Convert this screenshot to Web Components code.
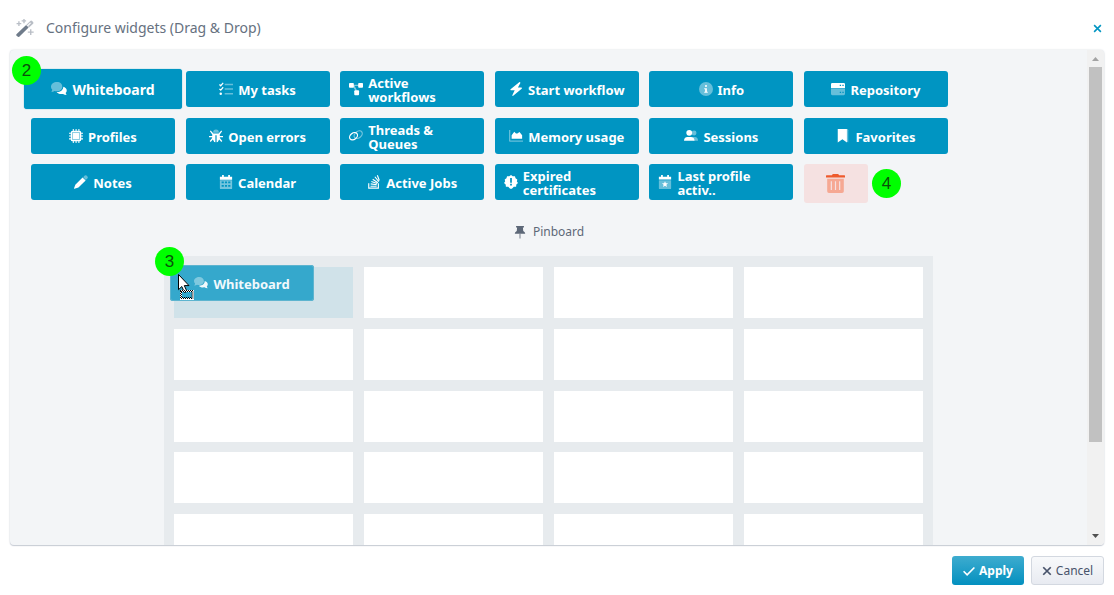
<!DOCTYPE html>
<html lang="en">
<head>
<meta charset="utf-8">
<title>Configure widgets</title>
<style>
html, body { margin: 0; height: 100%; }
body { background: #fff; font-family: "Noto Sans", "Open Sans", sans-serif; font-size: 13px; color: #5d6878; }
</style>
</head>
<body>
<config-dialog>
  <ui-icon slot="icon" name="wand"></ui-icon>
  <span slot="title">Configure widgets (Drag &amp; Drop)</span>
  <widget-palette>
    <widget-tile icon="chat" lifted step="2">Whiteboard</widget-tile>
    <widget-tile icon="tasks">My tasks</widget-tile>
    <widget-tile icon="flow">Active workflows</widget-tile>
    <widget-tile icon="bolt">Start workflow</widget-tile>
    <widget-tile icon="info">Info</widget-tile>
    <widget-tile icon="server">Repository</widget-tile>
    <widget-tile icon="chip">Profiles</widget-tile>
    <widget-tile icon="bug">Open errors</widget-tile>
    <widget-tile icon="rings">Threads &amp; Queues</widget-tile>
    <widget-tile icon="chart">Memory usage</widget-tile>
    <widget-tile icon="users">Sessions</widget-tile>
    <widget-tile icon="bookmark">Favorites</widget-tile>
    <widget-tile icon="pencil">Notes</widget-tile>
    <widget-tile icon="calendar">Calendar</widget-tile>
    <widget-tile icon="stack">Active Jobs</widget-tile>
    <widget-tile icon="badge">Expired certificates</widget-tile>
    <widget-tile icon="calstar">Last profile activ..</widget-tile>
    <trash-drop step="4"></trash-drop>
  </widget-palette>
  <pin-board rows="5" columns="4">
    <widget-tile icon="chat" ghost>Whiteboard</widget-tile>
  </pin-board>
</config-dialog>

<script>
const icons = {
  wand: '<path fill="#6f7b8a" d="M.4 13.600 9 5.400l2.200 2.200-8.300 8.100q-.8.500-1.500-.2l-.9-.7q-.7-.6-.1-1.200z"/><path fill="#b9bec6" d="m9.200 5.100 3.500-3.400q.8-.7 1.600 0l.9.900q.7.800 0 1.600l-3.600 3.300-1-1 2.700-2.800-.7-.7-2.700 2.700zM2 2h1.200v1.500h1.500v1.200H3.200v1.500H2V4.700H.5V3.500H2zM6.500 0h1.200v1H9v1.200H7.700v1.500H6.500V2.200H5V1h1.500zM12.500 9h1.200v2h2v1.200h-2v2h-1.200v-2h-2V11h2z"/>',
  chat: '<path opacity=".4" d="M6 1C2.700 1 0 3 0 5.700c0 1.200.5 2.200 1.300 3L.4 11c1.200 0 2.300-.4 3.100-.9 4.200 1 7.800-1.200 7.800-4.400C11.300 3 9.200 1 6 1z"/><path d="M12.300 5.700c0 3.400-3.200 5.500-6.700 5.300.9 1.500 3.700 2.500 6.400 1.900 1 .6 2.200 1.100 3.600 1.100l-1-2c2.100-2 1.400-5.100-2.300-6.300z"/>',
  tasks: '<path d="m.5 2.800 1.500 1.500L4.800 1M.5 7.800 2 9.300 4.800 6" fill="none" stroke="currentColor" stroke-width="1.400"/><circle cx="2" cy="13.500" r="1.400"/><path opacity=".4" d="M6.500 2H16v1.800H6.500zM6.500 7H16v1.800H6.500zM6.500 12.500H16v1.800H6.500z"/>',
  flow: '<path opacity=".5" d="M4 3h8v1.500H6.500l2.500 5-1.300.7L4 4.800z"/><rect y="1" width="5.500" height="5.500" rx="1"/><rect x="10.500" y="1" width="5.500" height="5.500" rx="1"/><rect x="6" y="9.500" width="5.500" height="5.500" rx="1"/>',
  bolt: '<path d="M12 0 1.800 8.200q-.8.900.4 1.300h4.300L3.800 15q-.1 1.300 1 .8l9.700-8.200q.9-.9-.3-1.400h-4L13 1q0-1-1-1z"/>',
  info: '<circle opacity=".4" cx="8" cy="8" r="8"/><circle cx="8" cy="4.500" r="1.200"/><path d="M6 7h3v4h1v1.300H6V11h1V8.300H6z"/>',
  server: '<path fill-rule="evenodd" d="M1.500 1h13Q16 1 16 2.300V7H0V2.300Q0 1 1.500 1zM10 3v1.500h1.500V3zm3 0v1.500h1.500V3z"/><path opacity=".4" fill-rule="evenodd" d="M0 8h16v5.700q0 1.300-1.500 1.300h-13Q0 15 0 13.700zM10 11v1.500h1.500V11zm3 0v1.500h1.500V11z"/>',
  chip: '<rect x="4.600" y="4.600" width="6.800" height="6.800"/><path opacity=".55" d="M3 3h10v10H3z"/><path fill-rule="evenodd" d="M4.300 0h1.200v2h2V0h1.200v2h2V0h1.200v2Q14 2 14 4.300h2v1.200h-2v2h2v1.200h-2v2h2v1.200h-2Q14 14 11.900 14v2h-1.200v-2h-2v2H7.500v-2h-2v2H4.300v-2Q2 14 2 11.900H0v-1.200h2v-2H0V7.500h2v-2H0V4.300h2Q2 2 4.300 2zM3.500 3.500v9h9v-9z"/>',
  bug: '<path opacity=".4" d="M4.700 4.200a3.300 3.500 0 0 1 6.600 0z"/><path d="m2 1.700 3 3.500h6l3-3.500 1 .9-2.700 3.600V8H16v1.400h-3.600v1l2.800 3.400-1.100 1-2.500-2.900Q10.500 15 8.700 15V7H7.300v8Q5.500 15 4.400 11.900l-2.500 2.900-1.100-1 2.800-3.400v-1H0V8h3.700V6.200L1 2.600z"/>',
  rings: '<g fill="none" stroke="currentColor" stroke-width="1.400"><ellipse cx="10.500" cy="6.500" rx="5.200" ry="3.600" transform="rotate(-38 10.500 6.500)" opacity=".45"/><ellipse cx="5.200" cy="8.300" rx="5" ry="3.600" transform="rotate(-38 5.200 8.300)"/></g>',
  chart: '<path opacity=".4" d="M0 1h1.500v12H16v1.500H1Q0 14.500 0 13.500z"/><path d="M3 11V7l3-4 2 2h1.500L12 3.500l3 3.500v4z"/>',
  users: '<g opacity=".4"><circle cx="11.500" cy="4.500" r="2.800"/><path d="M10 9h2.500Q16 9 16 13.500h-5z"/></g><circle cx="6" cy="4.300" r="3.300"/><path d="M0 13.500Q0 9 4 9h4q4 0 4 4.500z"/>',
  bookmark: '<path d="M2 0h10.500v15.500l-5.200-3.800L2 15.500z"/><path opacity=".4" d="M12.500 0Q14 0 14 1.500v14l-1.500-1z"/>',
  pencil: '<path opacity=".4" d="m10.500 2.500 1.800-1.900q1-.9 2 0l1.100 1.200q.9 1 0 2l-1.900 1.800z"/><path d="m9.800 2.800 3.500 3.500-8.200 8.100L.5 15.600q-.6 0-.5-.6L1.500 11z"/>',
  calendar: '<path d="M3.500 0h2v2h5V0h2v2H15v3.500H1V2h2.500z"/><path opacity=".45" fill-rule="evenodd" d="M1 6h14v9q0 1-1 1H2q-1 0-1-1zM3 7.500v2h2.500v-2zm3.800 0v2h2.400v-2zm3.700 0v2H13v-2zM3 11.500v2h2.500v-2zm3.800 0v2h2.400v-2zm3.700 0v2H13v-2z"/>',
  stack: '<path fill="none" stroke="currentColor" stroke-width="1.300" d="M2 9.500V15h11V9.500M4 12.800h7M4.200 10.200l7 1M5 7.500l6.600 2.300M6.500 4.800l6 4M9 2l4.500 5.500M11.800.3l2.300 6"/>',
  badge: '<path fill-rule="evenodd" d="m8 0 2 1.500 2.500-.2.700 2.300 2 1.500-.5 2.200L16 9l-1.900 1.800-.3 2.500-2.600.2L9 15.700H7l-2.200-2.200-2.600-.2-.3-2.500L0 9l1.300-1.700-.5-2.200 2-1.500.7-2.300L6 1.500zM7 3.500v5.300h2V3.500zm0 6.500v2h2v-2z"/>',
  calstar: '<path d="M3.500 0h2v2h5V0h2v2H15v3H1V2h2.500z"/><path opacity=".4" d="M1 6h14v9q0 1-1 1H2q-1 0-1-1z"/><path d="m8 7 1 2.300 2.500.2-1.900 1.600.6 2.500L8 12.300l-2.200 1.300.6-2.500-1.900-1.600L7 9.300z"/>',
  trash: '<path fill="#ee5a2c" d="M0 1.500q0-.5.500-.5H5l.7-1h4.600l.7 1h4.500q.5 0 .5.500V3H0z"/><path fill="#f6a893" fill-rule="evenodd" d="M1 4h14v10.500q0 1.500-1.500 1.500h-11Q1 16 1 14.500zM4 6v7.500h1V6zm3.500 0v7.500h1V6zM11 6v7.500h1V6z"/>',
  pin: '<path d="M3.500 1h9v1.800h-1.200l.4 4q2.300 1 2.300 3.200H2q0-2.200 2.300-3.200l.4-4H3.500z"/><path opacity=".6" d="M7.200 10h1.600v5.500H7.200z"/>',
  check: '<path fill="none" stroke="currentColor" stroke-width="2.200" d="m.8 8.300 4.700 4.700 9.700-9.700"/>',
  cross: '<path fill="none" stroke="currentColor" stroke-width="2.800" d="m2 2 12 12m0-12-12 12"/>'
};

class UiIcon extends HTMLElement {
  constructor() {
    super();
    this.attachShadow({ mode: 'open' });
  }
  connectedCallback() {
    this.shadowRoot.innerHTML = `
      <style>
        :host { display: block; flex: none; width: 14px; height: 14px; }
        svg { display: block; width: 100%; height: 100%; fill: currentColor; overflow: visible; }
      </style>
      <svg viewBox="0 0 16 16" aria-hidden="true">${icons[this.getAttribute('name')] || ''}</svg>`;
  }
}

class StepBadge extends HTMLElement {
  constructor() {
    super();
    this.attachShadow({ mode: 'open' }).innerHTML = `
      <style>
        :host { display: flex; align-items: center; justify-content: center; box-sizing: border-box; width: 29px; height: 29px;
          border-radius: 50%; background: #0f0; color: #0b500b; font: 17px/20px "Liberation Sans", sans-serif; }
      </style>
      <slot></slot>`;
  }
}

class WidgetTile extends HTMLElement {
  constructor() {
    super();
    this.attachShadow({ mode: 'open' });
  }
  connectedCallback() {
    const step = this.getAttribute('step');
    this.shadowRoot.innerHTML = `
      <style>
        :host { display: block; position: relative; width: 144px; height: 36px; }
        button { display: flex; align-items: center; justify-content: center; gap: 5px; width: 100%; height: 100%;
          box-sizing: border-box; margin: 0; padding: 0 9px; border: 0; border-radius: 3px; background: #0095c2;
          color: #fff; font: 700 13px/14px "Noto Sans", "Open Sans", sans-serif; text-align: left; cursor: grab; }
        span { padding-top: 2px; }
        :host([lifted]) { width: 158px; height: 40px; margin: -2px -7px; }
        :host([lifted]) button { font-size: 14px; box-shadow: 0 0 1px #0095c2; }
        :host([lifted]) ui-icon { width: 16px; height: 16px; }
        :host([ghost]) button { background: #35a8cc; color: #f1f9fc; box-shadow: inset 0 0 0 1px #5db4cf; }
        step-badge { position: absolute; left: -12px; top: -13px; }
      </style>
      <button type="button"><ui-icon name="${this.getAttribute('icon')}"></ui-icon><span><slot></slot></span></button>
      ${step ? `<step-badge>${step}</step-badge>` : ''}`;
  }
}

class TrashDrop extends HTMLElement {
  constructor() {
    super();
    this.attachShadow({ mode: 'open' });
  }
  connectedCallback() {
    this.shadowRoot.innerHTML = `
      <style>
        :host { display: flex; align-items: center; gap: 4px; height: 39px; }
        button { display: flex; align-items: center; justify-content: center; width: 64px; height: 100%;
          margin: 0; padding: 0; border: 0; border-radius: 3px; background: #f5e1e1; }
        ui-icon { width: 19px; height: 19px; }
      </style>
      <button type="button" aria-label="Remove widget"><ui-icon name="trash"></ui-icon></button>
      <step-badge>${this.getAttribute('step')}</step-badge>`;
  }
}

class WidgetPalette extends HTMLElement {
  constructor() {
    super();
    this.attachShadow({ mode: 'open' }).innerHTML = `
      <style>
        :host { display: grid; grid-template-columns: repeat(6, 144px); justify-content: space-between;
          align-content: space-between; align-items: start; max-width: 917px; height: 132px; margin: 0 21px; }
      </style>
      <slot></slot>`;
  }
}

class PinBoard extends HTMLElement {
  constructor() {
    super();
    this.attachShadow({ mode: 'open' });
  }
  connectedCallback() {
    const columns = Number(this.getAttribute('columns'));
    const count = columns * Number(this.getAttribute('rows'));
    this.shadowRoot.innerHTML = `
      <style>
        :host { display: flex; flex-direction: column; align-items: center; padding-top: 19px; }
        h2 { display: flex; align-items: center; gap: 6px; margin: 0 0 14px; font-size: 12px; line-height: 20px; font-weight: 400; color: #5d6878; }
        .board { position: relative; display: grid; grid-template-columns: repeat(${columns}, 1fr); grid-auto-rows: 51px;
          column-gap: 11px; align-content: space-between; box-sizing: border-box; width: 769px; max-width: 100%;
          height: 319px; padding: 11px 10px 10px; background: #e7ebee; }
        .cell { background: #fff; }
        .cell.target { background: #d0e2e9; }
        .drag { position: absolute; left: 6px; top: 9px; }
        step-badge { position: absolute; left: -15px; top: -18px; }
        svg { position: absolute; left: 8px; top: 9px; }
      </style>
      <h2><ui-icon name="pin"></ui-icon>Pinboard</h2>
      <div class="board">
        ${Array.from({ length: count }, (_, i) => `<div class="cell${i ? '' : ' target'}"></div>`).join('')}
        <div class="drag">
          <slot></slot>
          <step-badge>3</step-badge>
          <svg width="18" height="27" viewBox="0 0 18 27" aria-hidden="true">
            <path d="M.5.5v15.200l3.300-3.200 2.700 6 2.500-1-2.700-5.900h4.700z" fill="#fff" stroke="#000"/>
            <path d="M3 17h12v8H3z" fill="none" stroke="#fff" stroke-width="2"/>
            <path d="M2 16.500h13v8H2.500v-8M3 17.500h11v6H3.500v-6" fill="none" stroke="#000" stroke-dasharray="1 1"/>
          </svg>
        </div>
      </div>`;
  }
}

class ScrollTrack extends HTMLElement {
  constructor() {
    super();
    this.attachShadow({ mode: 'open' }).innerHTML = `
      <style>
        :host { display: flex; flex-direction: column; align-items: center; flex: none; width: 17px; background: #f1f1f1; }
        svg { flex: none; width: 17px; height: 17px; }
        .track { flex: 1; width: 13px; }
        .thumb { height: 81.4%; background: #c1c1c1; }
      </style>
      <svg viewBox="0 0 17 17" aria-hidden="true"><path fill="#a3a3a3" d="M5 11l3.500-4 3.500 4z"/></svg>
      <div class="track"><div class="thumb"></div></div>
      <svg viewBox="0 0 17 17" aria-hidden="true"><path fill="#505050" d="M5 6l3.500 4L12 6z"/></svg>`;
  }
}

class DialogButton extends HTMLElement {
  constructor() {
    super();
    this.attachShadow({ mode: 'open' });
  }
  connectedCallback() {
    this.shadowRoot.innerHTML = `
      <style>
        :host { display: block; }
        button { display: flex; align-items: center; justify-content: center; gap: 4px; width: 73px; height: 29px;
          box-sizing: border-box; margin: 0; padding: 0; border: 1px solid #d3d8e0; border-radius: 3px;
          background: linear-gradient(#f8f9fb, #e8ebf1); color: #48536b; font: 12px/20px "Noto Sans", "Open Sans", sans-serif; }
        ui-icon { width: 10px; height: 10px; }
        :host([primary]) button { width: 72px; border: 0; background: linear-gradient(#3eaccf, #0390bf); color: #fff; font-weight: 700; }
        :host([primary]) ui-icon { width: 12px; height: 12px; }
      </style>
      <button type="button"><ui-icon name="${this.getAttribute('icon')}"></ui-icon><slot></slot></button>`;
  }
}

class ConfigDialog extends HTMLElement {
  constructor() {
    super();
    this.attachShadow({ mode: 'open' }).innerHTML = `
      <style>
        :host { display: flex; flex-direction: column; height: 100vh; box-sizing: border-box; padding: 0 10px; }
        header { display: flex; align-items: center; flex: none; height: 50px; padding: 6px 2px 0 6px; box-sizing: border-box; }
        ::slotted([slot="icon"]) { width: 18px; height: 18px; }
        h1 { flex: 1; margin: 0 0 0 12px; font-size: 14px; line-height: 20px; font-weight: 400; color: #667180; }
        .close { display: flex; margin: 0; padding: 0; border: 0; background: none; color: #0095c2; }
        .close ui-icon { width: 9px; height: 9px; }
        .panel { display: flex; flex: 1; min-height: 0; overflow: hidden; border-radius: 4px; background: #f3f5f7;
          box-shadow: 0 0 2px #cfd4da, 0 1px 1px #c5cad3; }
        .content { flex: 1; min-width: 0; overflow: hidden; padding-top: 21px; }
        footer { display: flex; flex: none; justify-content: flex-end; align-items: flex-start; gap: 7px; height: 50px; padding-top: 11px; box-sizing: border-box; }
      </style>
      <header>
        <slot name="icon"></slot>
        <h1><slot name="title"></slot></h1>
        <button class="close" type="button" aria-label="Close"><ui-icon name="cross"></ui-icon></button>
      </header>
      <section class="panel">
        <div class="content"><slot></slot></div>
        <scroll-track></scroll-track>
      </section>
      <footer>
        <dialog-button icon="check" primary>Apply</dialog-button>
        <dialog-button icon="cross">Cancel</dialog-button>
      </footer>`;
  }
}

customElements.define('ui-icon', UiIcon);
customElements.define('step-badge', StepBadge);
customElements.define('widget-tile', WidgetTile);
customElements.define('trash-drop', TrashDrop);
customElements.define('widget-palette', WidgetPalette);
customElements.define('pin-board', PinBoard);
customElements.define('scroll-track', ScrollTrack);
customElements.define('dialog-button', DialogButton);
customElements.define('config-dialog', ConfigDialog);
</script>
</body>
</html>
